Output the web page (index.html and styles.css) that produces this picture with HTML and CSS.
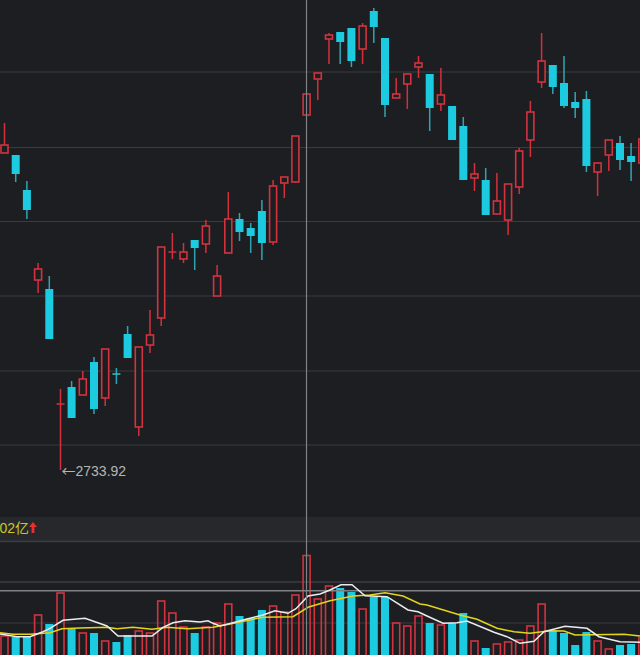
FILE: index.html
```html
<!DOCTYPE html>
<html lang="zh">
<head>
<meta charset="utf-8">
<title>K线图</title>
<link rel="stylesheet" href="styles.css">
</head>
<body>
<svg class="chart" viewBox="0 0 640 655" width="640" height="655" role="img" aria-label="K线图">
  <path class="grid" d="M0 72H640M0 147.5H640M0 221.5H640M0 296H640M0 371H640M0 445H640"/>
  <rect class="band" x="0" y="517" width="640" height="24"/>
  <path class="grid-strong" d="M0 541.5H640M0 582H640"/>
  <path class="grid" d="M0 623H640"/>

  <path class="wick-cyan" d="M15.7 155V182M26.9 181V219M49.3 276V339M71.6 381V418M94 357V414M116.4 368V384M127.6 326V358M194.7 240V270M239.5 213V241M250.7 223V253M261.9 200V260M340.2 32V64M351.4 28V67M373.8 8V43M385 38V117M429.7 74V131M452.1 106V140M463.3 117V180M485.7 168V215M552.8 65V94M564 56V108M575.2 92V118M586.4 91V172M620 136V170M631.1 143V181"/>
  <path class="wick-red" d="M4.5 123V153M38.1 263V293M60.5 389V470M56.5 404H64.5M82.8 371V395M105.2 349V406M138.8 347V436M150 310V353M161.2 247V326M172.4 233V259M168.4 252H176.4M183.5 243V263M205.9 220V253M217.1 265V296M228.3 192V253M273.1 180V245M284.3 177V198M295.4 136V183M306.6 94V115M317.8 73V100M329 33V64M362.6 23V64M396.2 78V98M407.3 74V109M418.5 56V78M440.9 68V111M474.5 163V191M496.9 173V214M508.1 184V235M519.2 148V194M530.4 101V157M541.6 33V88M597.6 163V196M608.8 140V171M642.3 139V163"/>
  <path class="wick-cyan-flat" d="M112.4 374H120.4"/>

  <g class="body-red">
    <rect x="1" y="145" height="8"/><rect x="34.6" y="269" height="11"/><rect x="79.3" y="379" height="16"/><rect x="101.7" y="349" height="49"/><rect x="135.3" y="347" height="80"/><rect x="146.5" y="335" height="10"/><rect x="157.7" y="247" height="71"/><rect x="180" y="252" height="7"/><rect x="202.4" y="226" height="18"/><rect x="213.6" y="276" height="20"/><rect x="224.8" y="219" height="34"/><rect x="269.6" y="186" height="56"/><rect x="280.8" y="177" height="6"/><rect x="291.9" y="136" height="46"/><rect x="303.1" y="94" height="21"/><rect x="314.3" y="73" height="6"/><rect x="325.5" y="35" height="4"/><rect x="359.1" y="26" height="23"/><rect x="392.7" y="94" height="4"/><rect x="403.8" y="74" height="10"/><rect x="415" y="63" height="4"/><rect x="437.4" y="95" height="9"/><rect x="471" y="174" height="4"/><rect x="493.4" y="201" height="13"/><rect x="504.6" y="184" height="36"/><rect x="515.7" y="151" height="36"/><rect x="526.9" y="112" height="28"/><rect x="538.1" y="61" height="21"/><rect x="594.1" y="163" height="9"/><rect x="605.3" y="140" height="15"/><rect x="638.8" y="139" height="24"/>
  </g>
  <g class="body-cyan">
    <rect x="11.7" y="155" height="19"/><rect x="22.9" y="190" height="20"/><rect x="45.3" y="289" height="50"/><rect x="67.6" y="387" height="31"/><rect x="90" y="362" height="47"/><rect x="123.6" y="334" height="24"/><rect x="190.7" y="240" height="8"/><rect x="235.5" y="219" height="13"/><rect x="246.7" y="228" height="8"/><rect x="257.9" y="211" height="32"/><rect x="336.2" y="32" height="10"/><rect x="347.4" y="28" height="33"/><rect x="369.8" y="11" height="16"/><rect x="381" y="38" height="67"/><rect x="425.7" y="74" height="34"/><rect x="448.1" y="106" height="34"/><rect x="459.3" y="126" height="54"/><rect x="481.7" y="180" height="35"/><rect x="548.8" y="65" height="22"/><rect x="560" y="83" height="23"/><rect x="571.2" y="102" height="6"/><rect x="582.4" y="99" height="67"/><rect x="616" y="143" height="17"/><rect x="627.1" y="156" height="6"/>
  </g>

  <g class="vol-red">
    <rect x="1" y="636" height="24"/><rect x="34.6" y="615" height="45"/><rect x="57" y="593" height="67"/><rect x="79.3" y="633" height="27"/><rect x="101.7" y="641" height="19"/><rect x="135.3" y="631" height="29"/><rect x="146.5" y="633" height="27"/><rect x="157.7" y="601" height="59"/><rect x="168.9" y="613" height="47"/><rect x="180" y="627" height="33"/><rect x="202.4" y="627" height="33"/><rect x="213.6" y="623" height="37"/><rect x="224.8" y="604" height="56"/><rect x="269.6" y="606" height="54"/><rect x="280.8" y="612" height="48"/><rect x="291.9" y="595" height="65"/><rect x="303.1" y="555.5" height="105"/><rect x="314.3" y="599" height="61"/><rect x="325.5" y="586" height="74"/><rect x="359.1" y="609" height="51"/><rect x="392.7" y="623" height="37"/><rect x="403.8" y="626" height="34"/><rect x="415" y="616" height="44"/><rect x="437.4" y="625" height="35"/><rect x="471" y="641" height="19"/><rect x="493.4" y="644" height="16"/><rect x="504.6" y="642" height="18"/><rect x="515.7" y="640" height="20"/><rect x="526.9" y="626" height="34"/><rect x="538.1" y="604" height="56"/><rect x="594.1" y="641" height="19"/><rect x="605.3" y="649" height="11"/><rect x="638.8" y="638" height="22"/>
  </g>
  <g class="vol-cyan">
    <rect x="11.7" y="637" height="23"/><rect x="22.9" y="637" height="23"/><rect x="45.3" y="624" height="36"/><rect x="67.6" y="629" height="31"/><rect x="90" y="633" height="27"/><rect x="112.4" y="642" height="18"/><rect x="123.6" y="635" height="25"/><rect x="190.7" y="633" height="27"/><rect x="235.5" y="616" height="44"/><rect x="246.7" y="618" height="42"/><rect x="257.9" y="610" height="50"/><rect x="336.2" y="588" height="72"/><rect x="347.4" y="592" height="68"/><rect x="369.8" y="597" height="63"/><rect x="381" y="597" height="63"/><rect x="425.7" y="623" height="37"/><rect x="448.1" y="623" height="37"/><rect x="459.3" y="613" height="47"/><rect x="481.7" y="648" height="12"/><rect x="548.8" y="631" height="29"/><rect x="560" y="633" height="27"/><rect x="571.2" y="645" height="15"/><rect x="582.4" y="632" height="28"/><rect x="616" y="645" height="15"/><rect x="627.1" y="644" height="16"/>
  </g>

  <path class="rule" d="M0 590.7H640"/>
  <polyline class="ma-yellow" points="0,632.7 13,634.3 30,634.3 50,632.7 62,628.7 80,628 107,627.3 117,628.7 133,627.3 152,629.3 167,627.3 187,628.7 213,627.3 230,624 246,620.7 263,617.3 293,616.7 308,607.3 330,600.7 353,596 370,595 385,592.7 403,596 420,604 427,605 460,615 477,619.3 497,628.3 514,631.7 530,633.3 550,630.7 564,631 575,635 624,634.3 640,636"/>
  <polyline class="ma-white" points="0,634 17,636.7 30,636.7 43,631.7 50,628.3 63,620.3 85,618.3 107,626 118,636 152,636 163,627.3 173,622.7 185,620.7 200,622 208,620.8 213,623.3 220,626 233,622.7 246,619.3 263,615 275,610.7 288,613.3 296,608.7 308,596 320,594 330,590 341,584.7 352,584.7 365,595.7 387,596.7 408,610 418,611.7 427,616 443,623.3 457,622.7 467,621 494,632.3 507,636.7 520,643.3 534,641.3 544,631.7 565,626.3 587,628.3 599,636.7 620,641.7 640,642.3"/>

  <path class="cross" d="M306.5 0V655"/>

  <text class="low-label" x="61.5" y="476"><tspan class="low-arrow">←</tspan>2733.92</text>
  <text class="amount" x="-0.5" y="533">02亿</text>
  <path class="up-arrow" d="M33 522L37 527H34.4V533H31.6V527H29Z"/>
</svg>
</body>
</html>
```

FILE: styles.css
```css
html, body {
  margin: 0;
  padding: 0;
  background: #1d1e22;
  overflow: hidden;
}

.chart {
  display: block;
  width: 640px;
  height: 655px;
}

.grid {
  fill: none;
  stroke: #3a3b3e;
  stroke-width: 1;
}

.grid-strong {
  fill: none;
  stroke: #3c3d40;
  stroke-width: 1.4;
}

.band {
  fill: #27282c;
}

.wick-red {
  fill: none;
  stroke: #d4303c;
  stroke-width: 1.5;
}

.wick-cyan {
  fill: none;
  stroke: #2fa5b4;
  stroke-width: 1.5;
}

.wick-cyan-flat {
  fill: none;
  stroke: #2fb8ca;
  stroke-width: 1.6;
}

.body-red rect,
.vol-red rect {
  width: 7px;
  stroke: #d2333f;
  stroke-width: 1.6;
}

.body-red rect {
  fill: #1d1e22;
}

.vol-red rect {
  fill: none;
}

.body-cyan rect,
.vol-cyan rect {
  width: 8px;
  fill: #1ccbe0;
}

.rule {
  fill: none;
  stroke: #808184;
  stroke-width: 1.4;
}

.ma-yellow {
  fill: none;
  stroke: #e2d51a;
  stroke-width: 1.5;
}

.ma-white {
  fill: none;
  stroke: #ececee;
  stroke-width: 1.5;
}

.cross {
  fill: none;
  stroke: #808184;
  stroke-width: 1.2;
}

.low-label {
  fill: #b4b5b7;
  font-family: "Liberation Sans", "Noto Sans CJK SC", sans-serif;
  font-size: 14px;
}

.low-arrow {
  font-family: "Noto Sans CJK SC", sans-serif;
}

.amount {
  fill: #c9c91e;
  font-family: "Liberation Sans", "Noto Sans CJK SC", sans-serif;
  font-size: 14px;
}

.up-arrow {
  fill: #e9302c;
}
```
